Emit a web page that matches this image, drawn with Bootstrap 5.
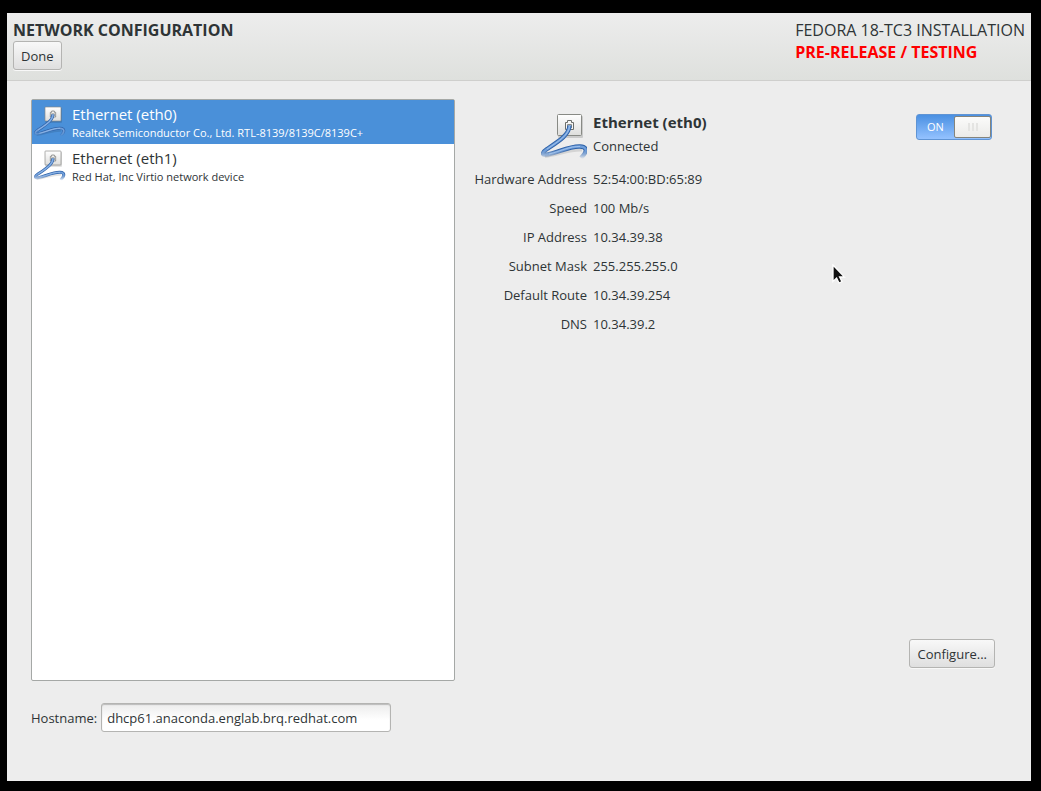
<!DOCTYPE html>
<html lang="en">
<head>
<meta charset="utf-8">
<meta name="viewport" content="width=device-width, initial-scale=1">
<title>Network Configuration</title>
<link href="https://cdn.jsdelivr.net/npm/bootstrap@5.3.0/dist/css/bootstrap.min.css" rel="stylesheet">
<style>
  body { background: #000; color: #2e3436; font: 13px/18px "Open Sans", "Noto Sans", sans-serif; padding: 13px 10px 10px 7px; }
  .spoke { background: #ededed; }
  .spoke-header { background: linear-gradient(#ededed, #dee0dd); border-bottom: 1px solid #cfcfcd; padding: 6px 6px 10px; font-size: 16px; line-height: 22px; }
  .spoke-header h1 { font-size: 16px; line-height: 22px; }
  .prerelease { color: #f00; }
  .btn-gtk { --bs-btn-font-size: 13px; --bs-btn-border-radius: 3px;
    --bs-btn-color: #2e3436; --bs-btn-border-color: #b4b4b2; --bs-btn-hover-border-color: #999; --bs-btn-active-border-color: #888;
    height: 29px; padding: 5px 7px 3px; line-height: 19px; background: linear-gradient(#f8f8f8, #dfdfdf); box-shadow: 0 1px 0 #f8f8f8; }
  .spoke-body { padding: 18px 24px 49px; }
  .device-panel { flex: 0 0 424px; background: #fff; border: 1px solid #a5a8a6; border-radius: 2px; }
  .list-group { --bs-list-group-item-padding-x: 2px; --bs-list-group-item-padding-y: 0; --bs-list-group-border-width: 0;
    --bs-list-group-color: #2e3436; --bs-list-group-action-color: #2e3436; --bs-list-group-active-bg: #4a90d9; }
  .device { gap: 6px; height: 44px; }
  .device-text { padding-top: 4px; }
  .device-name { font-size: 15px; line-height: 18px; }
  .device-detail { font-size: 11px; line-height: 20px; }
  .details { padding: 12px 12px 13px 18px; }
  .label-col { width: 114px; }
  .title-row { gap: 6px; margin-bottom: 5px; }
  .title-row h2 { font-size: 15px; line-height: 22px; }
  .title-row p { line-height: 26px; }
  .facts th, .facts td { height: 29px; padding: 0; font-weight: 400; }
  .facts td { padding-left: 6px; }
  .toggle { width: 76px; height: 26px; margin: 3px 3px 0 0; }
  .toggle input { width: 76px; height: 26px; margin: 0; appearance: none; display: block; border: 1px solid #5f94d4; border-radius: 3px; background: linear-gradient(#4a90e2, #94c2ff); }
  .toggle-text { left: 11px; top: 0; color: #fff; font-size: 11px; line-height: 26px; pointer-events: none; }
  .toggle-knob { right: 1px; top: 2px; width: 37px; height: 22px; gap: 2px; border: 1px solid #84847c; border-radius: 2px; background: linear-gradient(#fbfbfa, #ebebe9); pointer-events: none; }
  .toggle-knob i { width: 2px; height: 8px; background: #e4e4e2; }
  .hostname-row { margin-top: 22px; gap: 4px; }
  .hostname-row .form-control { width: 290px; height: 29px; padding: 0 5px; font-size: 13px; color: #2e3436; border: 1px solid #b4b4b2; border-radius: 3px; background: linear-gradient(#ececec, #fff 16px); box-shadow: inset 0 1px 1px #bbb; }
  .pointer { left: 80.6%; top: 251px; }
</style>
</head>
<body class="min-vh-100 d-flex flex-column">
<svg width="0" height="0" class="position-absolute" aria-hidden="true">
  <defs>
    <linearGradient id="plate" x1="0" y1="0" x2="0" y2="1"><stop offset="0" stop-color="#fff"/><stop offset="1" stop-color="#dededc"/></linearGradient>
    <linearGradient id="cable-end" gradientUnits="userSpaceOnUse" x1="0" y1="37" x2="0" y2="46"><stop offset="0" stop-color="#2f62a8"/><stop offset="1" stop-color="#3b6eb4" stop-opacity="0"/></linearGradient>
    <linearGradient id="cable-shine" gradientUnits="userSpaceOnUse" x1="0" y1="37" x2="0" y2="45"><stop offset="0" stop-color="#6f9eda"/><stop offset="1" stop-color="#9fc2ec" stop-opacity="0"/></linearGradient>
    <symbol id="wired" viewBox="0 0 48 48">
      <rect x="17" y="3" width="25" height="22" rx="1" fill="#000" opacity=".14"/>
      <rect x="16.500" y="1.500" width="24" height="21" rx="1" fill="url(#plate)" stroke="#888a85"/>
      <path d="M24.500 16.500V9.500H26.500V7.500H30.500V9.500H32.500V16.500z" fill="#f5f5f5" stroke="#6b6d69"/>
      <path d="M26.500 15V11.500H30.500V15" fill="none" stroke="#888a85"/>
      <path d="M4 43.500C17 42 28 36.500 41 37" fill="none" stroke="#000" stroke-opacity=".1" stroke-width="3"/>
      <path d="M28.500 12.500C28 22 18 28 6 36C0 40 1 43 7 41.500C18 39 29 33 39 33.500C47 34 46 39 40 45" fill="none" stroke="url(#cable-end)" stroke-width="4.400"/>
      <path d="M28.500 12.500C28 22 18 28 6 36C0 40 1 43 7 41.500C18 39 29 33 39 33.500C47 34 46 39 40 45" fill="none" stroke="url(#cable-shine)" stroke-width="2.400"/>
      <path d="M28.500 13C28 22 18 28 6 36M8 41C19 38.500 29 33 39 33.500" fill="none" stroke="#a9c9f0" stroke-width=".8"/>
    </symbol>
  </defs>
</svg>
<div class="spoke position-relative flex-grow-1 d-flex flex-column">
  <header class="spoke-header d-flex justify-content-between">
    <div>
      <h1 class="fw-bold m-0">NETWORK CONFIGURATION</h1>
      <button type="button" class="btn btn-gtk d-block">Done</button>
    </div>
    <div>
      <div>FEDORA 18-TC3 INSTALLATION</div>
      <div class="prerelease fw-bold">PRE-RELEASE / TESTING</div>
    </div>
  </header>
  <main class="spoke-body flex-grow-1 d-flex flex-column">
    <div class="flex-grow-1 d-flex">
      <div class="device-panel">
        <div class="list-group rounded-0">
          <button type="button" class="device list-group-item list-group-item-action active d-flex align-items-center" aria-current="true">
            <svg width="32" height="32" aria-hidden="true"><use href="#wired"/></svg>
            <span class="device-text"><span class="device-name d-block">Ethernet (eth0)</span><span class="device-detail d-block">Realtek Semiconductor Co., Ltd. RTL-8139/8139C/8139C+</span></span>
          </button>
          <button type="button" class="device list-group-item list-group-item-action d-flex align-items-center">
            <svg width="32" height="32" aria-hidden="true"><use href="#wired"/></svg>
            <span class="device-text"><span class="device-name d-block">Ethernet (eth1)</span><span class="device-detail d-block">Red Hat, Inc Virtio network device</span></span>
          </button>
        </div>
      </div>
      <section class="details flex-grow-1 d-flex flex-column">
        <div class="title-row d-flex">
          <div class="label-col text-end"><svg width="48" height="48" viewBox="-2 -2 48 48" aria-hidden="true"><use href="#wired" width="48" height="48"/></svg></div>
          <div class="flex-grow-1"><h2 class="fw-bold m-0">Ethernet (eth0)</h2><p class="m-0">Connected</p></div>
          <label class="toggle position-relative">
            <input type="checkbox" role="switch" checked>
            <span class="toggle-text position-absolute">ON</span>
            <span class="toggle-knob position-absolute d-flex align-items-center justify-content-center"><i></i><i></i><i></i></span>
          </label>
        </div>
        <table class="facts">
          <tbody>
            <tr><th scope="row" class="label-col text-end text-nowrap">Hardware Address</th><td>52:54:00:BD:65:89</td></tr>
            <tr><th scope="row" class="text-end">Speed</th><td>100 Mb/s</td></tr>
            <tr><th scope="row" class="text-end">IP Address</th><td>10.34.39.38</td></tr>
            <tr><th scope="row" class="text-end">Subnet Mask</th><td>255.255.255.0</td></tr>
            <tr><th scope="row" class="text-end">Default Route</th><td>10.34.39.254</td></tr>
            <tr><th scope="row" class="text-end">DNS</th><td>10.34.39.2</td></tr>
          </tbody>
        </table>
        <button type="button" class="btn btn-gtk mt-auto ms-auto">Configure...</button>
      </section>
    </div>
    <div class="hostname-row d-flex align-items-center">
      <label for="hostname">Hostname:</label>
      <input id="hostname" type="text" class="form-control" value="dhcp61.anaconda.englab.brq.redhat.com">
    </div>
  </main>
  <svg class="pointer position-absolute" width="14" height="22" viewBox="0 0 14 22" aria-hidden="true">
    <path d="M1 1V17.500L4.600 14L7 19L10 17.700L7.600 13H12.500z" fill="#111" stroke="#fff" stroke-width="1.300"/>
  </svg>
</div>
<script src="https://cdn.jsdelivr.net/npm/bootstrap@5.3.0/dist/js/bootstrap.bundle.min.js"></script>
</body>
</html>
